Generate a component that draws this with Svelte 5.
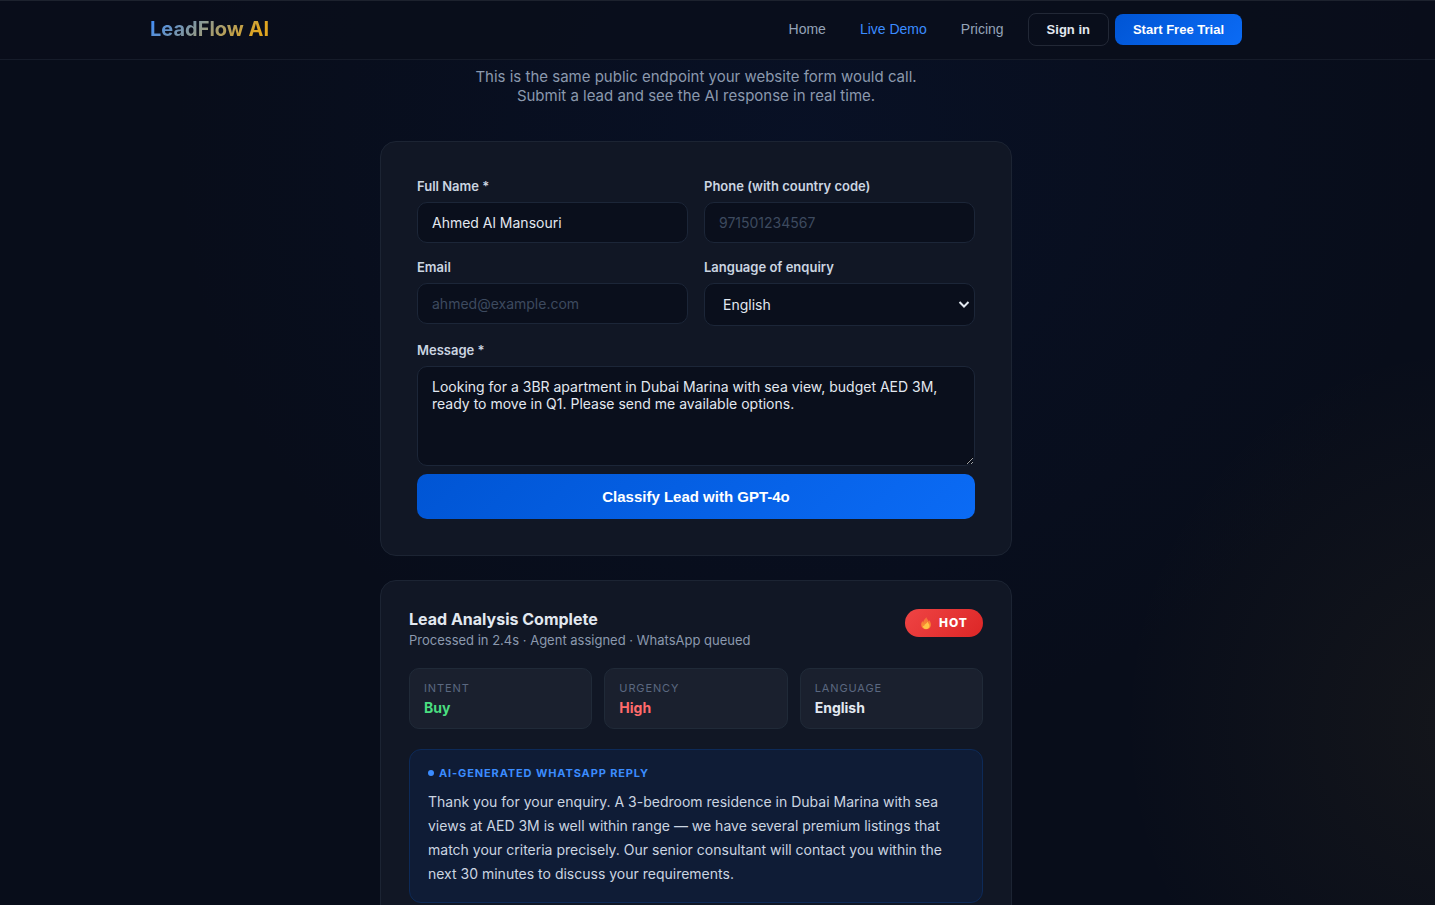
<script lang="ts">
  interface Fact {
    label: string;
    value: string;
    tone: "buy" | "hot" | "plain";
  }

  const links = [
    { label: "Home", href: "#home", active: false },
    { label: "Live Demo", href: "#demo", active: true },
    { label: "Pricing", href: "#pricing", active: false },
  ];

  const languages = ["English", "Arabic", "Russian", "Hindi"];

  const facts: Fact[] = [
    { label: "Intent", value: "Buy", tone: "buy" },
    { label: "Urgency", value: "High", tone: "hot" },
    { label: "Language", value: "English", tone: "plain" },
  ];

  let name = $state("Ahmed Al Mansouri");
  let phone = $state("");
  let email = $state("");
  let language = $state("English");
  let message = $state(
    "Looking for a 3BR apartment in Dubai Marina with sea view, budget AED 3M, ready to move in Q1. Please send me available options."
  );
</script>

<div class="page">
  <header>
    <div class="container bar">
      <a class="logo" href="#home">LeadFlow AI</a>
      <nav>
        <div class="links">
          {#each links as link}
            <a href={link.href} class:active={link.active}>{link.label}</a>
          {/each}
        </div>
        <div class="actions">
          <button type="button" class="ghost">Sign in</button>
          <button type="button" class="primary">Start Free Trial</button>
        </div>
      </nav>
    </div>
  </header>

  <main>
    <p class="intro">
      This is the same public endpoint your website form would call.<br />
      Submit a lead and see the AI response in real time.
    </p>

    <form class="card form" onsubmit={(e) => e.preventDefault()}>
      <div class="grid">
        <div class="field">
          <label for="name">Full Name *</label>
          <input id="name" type="text" bind:value={name} />
        </div>
        <div class="field">
          <label for="phone">Phone (with country code)</label>
          <input id="phone" type="tel" placeholder="971501234567" bind:value={phone} />
        </div>
        <div class="field">
          <label for="email">Email</label>
          <input id="email" type="email" placeholder="ahmed@example.com" bind:value={email} />
        </div>
        <div class="field">
          <label for="language">Language of enquiry</label>
          <div class="select">
            <select id="language" bind:value={language}>
              {#each languages as item}
                <option>{item}</option>
              {/each}
            </select>
            <svg viewBox="0 0 12 8" aria-hidden="true">
              <path d="M1.5 1 L6 5.5 L10.5 1" fill="none" stroke="currentColor" stroke-width="2" />
            </svg>
          </div>
        </div>
        <div class="field wide">
          <label for="message">Message *</label>
          <textarea id="message" spellcheck="false" bind:value={message}></textarea>
        </div>
      </div>
      <button type="submit" class="primary submit">Classify Lead with GPT-4o</button>
    </form>

    <section class="card result">
      <div class="result-head">
        <div>
          <h2>Lead Analysis Complete</h2>
          <p class="meta">Processed in 2.4s · Agent assigned · WhatsApp queued</p>
        </div>
        <span class="badge">
          <svg viewBox="2 1 12 15" aria-hidden="true">
            <defs>
              <linearGradient id="flame" x1="0" x2="0" y1="0" y2="1">
                <stop offset="0%" stop-color="#f4683b" />
                <stop offset="100%" stop-color="#fb9a2e" />
              </linearGradient>
            </defs>
            <path
              d="M8.6 1 C8.8 3.2 11.1 4.2 11.2 6.2 L12.2 4.6 C13.3 6.6 14 8.3 13.8 10.5 C13.5 13.6 11 15.4 8 15.4 C5 15.4 2.5 13.4 2.3 10.3 C2.2 8.4 2.8 6.9 3.6 5.5 L4.7 7.2 C4.9 4.5 6.3 3.1 8.6 1 Z"
              fill="url(#flame)"
            />
            <path
              d="M10 6.5 C10.4 8.6 12.1 9.2 12.1 11.2 C12.1 13.4 10.4 15 8.1 15 C5.8 15 4.2 13.3 4.3 11.1 L5.7 11.8 C6 9 8.8 9.2 10 6.5 Z"
              fill="#ffc246"
            />
          </svg>
          HOT
        </span>
      </div>

      <div class="facts">
        {#each facts as fact}
          <div class="fact">
            <div class="fact-label">{fact.label}</div>
            <div class="fact-value {fact.tone}">{fact.value}</div>
          </div>
        {/each}
      </div>

      <div class="reply">
        <div class="reply-title"><span class="dot"></span>AI-Generated WhatsApp Reply</div>
        <p>
          Thank you for your enquiry. A 3-bedroom residence in Dubai Marina with sea views at AED 3M
          is well within range — we have several premium listings that match your criteria
          precisely. Our senior consultant will contact you within the next 30 minutes to discuss
          your requirements.
        </p>
      </div>
    </section>
  </main>
</div>

<style>
  :global(body) {
    background: #080d1a;
  }
  .page {
    height: 100vh;
    overflow: hidden;
    box-sizing: border-box;
    color: #e2e8f0;
    font-family: Inter, "Liberation Sans", sans-serif;
    background:
      radial-gradient(ellipse 44% 66% at 56% 16%, rgba(10, 36, 96, 0.16), transparent),
      radial-gradient(ellipse 24% 42% at 102% 80%, rgba(212, 160, 40, 0.06), transparent),
      #080d1a;
  }
  button,
  input,
  select,
  textarea {
    box-sizing: border-box;
  }
  input,
  select,
  textarea {
    font-family: inherit;
  }
  header {
    box-sizing: border-box;
    height: 60px;
    padding-right: 43px;
    border-bottom: 1px solid #161c2a;
    background: rgba(9, 14, 27, 0.85);
    box-shadow: inset 0 1px #1d222e;
  }
  .container {
    box-sizing: border-box;
    max-width: 1140px;
    margin: 0 auto;
    padding: 0 24px;
  }
  .bar {
    height: 100%;
    display: flex;
    align-items: center;
    justify-content: space-between;
  }
  .logo {
    font-size: 20px;
    font-weight: 700;
    line-height: 25px;
    text-decoration: none;
    color: transparent;
    background: linear-gradient(135deg, #3b8cff, #e0a520 85%);
    background-clip: text;
  }
  nav {
    display: flex;
    align-items: center;
    gap: 24px;
  }
  .links {
    display: flex;
    gap: 34px;
  }
  .links a {
    font-family: "Liberation Sans", Arial, sans-serif;
    font-size: 14px;
    line-height: 17px;
    color: #94a3b8;
    text-decoration: none;
  }
  .links a.active {
    color: #3b8cff;
  }
  .actions {
    display: flex;
    align-items: center;
    gap: 6px;
  }
  .ghost,
  .primary {
    border-radius: 8px;
    font-family: "Liberation Sans", Arial, sans-serif;
    font-size: 13px;
    font-weight: 600;
    line-height: 15px;
    padding: 8px 18px;
    cursor: pointer;
  }
  .ghost {
    color: #e2e8f0;
    background: transparent;
    border: 1px solid #222836;
  }
  .primary {
    color: #fff;
    border: 0;
    background: linear-gradient(135deg, #0055d4, #0b6bf5);
  }
  main {
    max-width: 632px;
    margin: 0 auto;
    padding: 7px 67px 0 24px;
  }
  .intro {
    margin: 0 0 36px;
    text-align: center;
    font-size: 15px;
    line-height: 19px;
    color: #8b99ae;
  }
  .card {
    border: 1px solid #1c2433;
    border-radius: 16px;
    background: #111725;
  }
  .form {
    padding: 36px;
  }
  .grid {
    display: grid;
    grid-template-columns: 1fr 1fr;
    gap: 16px;
  }
  .field {
    display: flex;
    flex-direction: column;
    gap: 8px;
  }
  .wide {
    grid-column: 1 / -1;
  }
  label {
    font-size: 13px;
    line-height: 16px;
    font-weight: 600;
    color: #cbd5e1;
  }
  input,
  select,
  textarea {
    width: 100%;
    padding: 11px 14px;
    border: 1px solid #1c2638;
    border-radius: 10px;
    outline: none;
    background: #0a0f1c;
    color: #e2e8f0;
    font-size: 14px;
    line-height: 17px;
  }
  input::placeholder {
    color: #3d4a5f;
  }
  input {
    height: 41px;
  }
  .select {
    position: relative;
  }
  .select svg {
    position: absolute;
    top: 18px;
    right: 5px;
    width: 12px;
    height: 8px;
    pointer-events: none;
  }
  select {
    display: block;
    height: 43px;
    padding: 11px 18px;
    appearance: none;
  }
  textarea {
    display: block;
    height: 100px;
    resize: vertical;
  }
  .submit {
    width: 100%;
    margin-top: 8px;
    padding: 14px;
    border-radius: 10px;
    font-size: 15px;
    line-height: 17px;
  }
  .result {
    margin-top: 24px;
    padding: 28px;
  }
  .result-head {
    display: flex;
    justify-content: space-between;
    align-items: flex-start;
  }
  h2 {
    margin: 0;
    font-size: 16px;
    font-weight: 700;
    line-height: 20px;
  }
  .meta {
    margin: 2px 0 0;
    font-size: 13px;
    line-height: 18px;
    color: #8b99ae;
  }
  .badge {
    display: flex;
    align-items: center;
    gap: 8px;
    padding: 6px 15px 6px 16px;
    border-radius: 16px;
    background: linear-gradient(135deg, #ef4444, #dc2626);
    color: #fff;
    font-size: 12px;
    font-weight: 800;
    line-height: 16px;
    letter-spacing: 1px;
  }
  .badge svg {
    width: 10px;
    height: 13px;
  }
  .facts {
    display: grid;
    grid-template-columns: repeat(3, 1fr);
    gap: 12px;
    margin-top: 19px;
  }
  .fact {
    padding: 12px 14px;
    border: 1px solid #202a38;
    border-radius: 10px;
    background: #1a202e;
  }
  .fact-label {
    font-size: 11px;
    line-height: 14px;
    letter-spacing: 0.08em;
    text-transform: uppercase;
    color: #5b6880;
  }
  .fact-value {
    margin-top: 4px;
    font-size: 14px;
    font-weight: 700;
    line-height: 17px;
  }
  .buy {
    color: #4ade80;
  }
  .hot {
    color: #ff6b6b;
  }
  .reply {
    margin-top: 20px;
    padding: 16px 18px;
    border: 1px solid #0d2a58;
    border-radius: 12px;
    background: #0f1c36;
  }
  .reply-title {
    display: flex;
    align-items: center;
    gap: 5px;
    font-size: 11px;
    font-weight: 700;
    line-height: 14px;
    letter-spacing: 0.08em;
    text-transform: uppercase;
    color: #3b8cff;
  }
  .dot {
    width: 6px;
    height: 6px;
    border-radius: 50%;
    background: currentColor;
  }
  .reply p {
    margin: 10px 0 0;
    font-size: 14px;
    line-height: 24px;
    color: #cbd5e1;
  }
</style>
